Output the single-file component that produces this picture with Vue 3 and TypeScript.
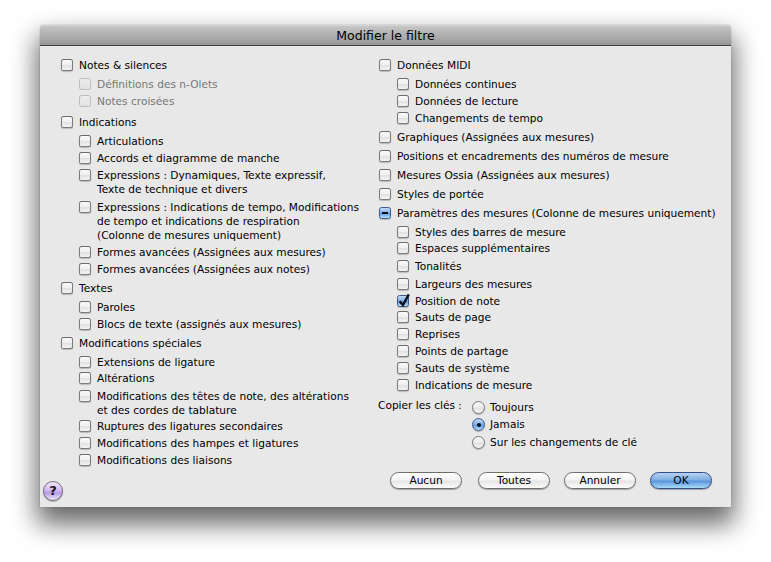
<script setup lang="ts">
type State = 'off' | 'on' | 'mixed'
interface Row { label: string; child?: boolean; gap: number; state?: State; disabled?: boolean }

const left: Row[] = [
  { label: 'Notes & silences', gap: 0 },
  { label: 'Définitions des n-Olets', child: true, gap: 5, disabled: true },
  { label: 'Notes croisées', child: true, gap: 3, disabled: true },
  { label: 'Indications', gap: 7 },
  { label: 'Articulations', child: true, gap: 5 },
  { label: 'Accords et diagramme de manche', child: true, gap: 3 },
  { label: 'Expressions : Dynamiques, Texte expressif,\nTexte de technique et divers', child: true, gap: 3 },
  { label: 'Expressions : Indications de tempo, Modifications\nde tempo et indications de respiration\n(Colonne de mesures uniquement)', child: true, gap: 4 },
  { label: 'Formes avancées (Assignées aux mesures)', child: true, gap: 3 },
  { label: 'Formes avancées (Assignées aux notes)', child: true, gap: 3 },
  { label: 'Textes', gap: 5 },
  { label: 'Paroles', child: true, gap: 5 },
  { label: 'Blocs de texte (assignés aux mesures)', child: true, gap: 3 },
  { label: 'Modifications spéciales', gap: 5 },
  { label: 'Extensions de ligature', child: true, gap: 5 },
  { label: 'Altérations', child: true, gap: 2 },
  { label: 'Modifications des têtes de note, des altérations\net des cordes de tablature', child: true, gap: 4 },
  { label: 'Ruptures des ligatures secondaires', child: true, gap: 2 },
  { label: 'Modifications des hampes et ligatures', child: true, gap: 3 },
  { label: 'Modifications des liaisons', child: true, gap: 3 },
]

const right: Row[] = [
  { label: 'Données MIDI', gap: 0 },
  { label: 'Données continues', child: true, gap: 5 },
  { label: 'Données de lecture', child: true, gap: 3 },
  { label: 'Changements de tempo', child: true, gap: 3 },
  { label: 'Graphiques (Assignées aux mesures)', gap: 5 },
  { label: 'Positions et encadrements des numéros de mesure', gap: 5 },
  { label: 'Mesures Ossia (Assignées aux mesures)', gap: 5 },
  { label: 'Styles de portée', gap: 5 },
  { label: 'Paramètres des mesures (Colonne de mesures uniquement)', gap: 5, state: 'mixed' },
  { label: 'Styles des barres de mesure', child: true, gap: 5 },
  { label: 'Espaces supplémentaires', child: true, gap: 2 },
  { label: 'Tonalités', child: true, gap: 4 },
  { label: 'Largeurs des mesures', child: true, gap: 4 },
  { label: 'Position de note', child: true, gap: 3, state: 'on' },
  { label: 'Sauts de page', child: true, gap: 2 },
  { label: 'Reprises', child: true, gap: 3 },
  { label: 'Points de partage', child: true, gap: 3 },
  { label: 'Sauts de système', child: true, gap: 3 },
  { label: 'Indications de mesure', child: true, gap: 3 },
]

const radios = [
  { label: 'Toujours', on: false, gap: 0 },
  { label: 'Jamais', on: true, gap: 3 },
  { label: 'Sur les changements de clé', on: false, gap: 4 },
]

const buttons = [
  { label: 'Aucun', primary: false },
  { label: 'Toutes', primary: false },
  { label: 'Annuler', primary: false },
  { label: 'OK', primary: true },
]
</script>

<template>
  <div class="page">
    <div class="window">
      <div class="titlebar">Modifier le filtre</div>
      <div class="content">
        <div class="col-left">
          <div class="list left-list">
            <div
              v-for="r in left"
              :key="r.label"
              class="row"
              :class="{ child: r.child, disabled: r.disabled }"
              :style="{ marginTop: r.gap + 'px' }"
            >
              <span class="box"></span>
              <span class="label">{{ r.label }}</span>
            </div>
          </div>
          <div class="help"><span>?</span></div>
        </div>
        <div class="col-right">
          <div class="list">
            <div
              v-for="r in right"
              :key="r.label"
              class="row"
              :class="{ child: r.child }"
              :style="{ marginTop: r.gap + 'px' }"
            >
              <span class="box" :class="r.state">
                <svg v-if="r.state === 'on'" class="tick" width="15" height="15" viewBox="0 0 15 15">
                  <path d="M2.6 8.2 L6 12 L11.8 1.4" fill="none" stroke="#0b0f1a" stroke-width="2.4" />
                </svg>
                <i v-if="r.state === 'mixed'" class="dash"></i>
              </span>
              <span class="label">{{ r.label }}</span>
            </div>
          </div>
          <div class="copy">
            <div class="copy-label">Copier les clés :</div>
            <div class="radios">
              <div v-for="o in radios" :key="o.label" class="radio-row" :style="{ marginTop: o.gap + 'px' }">
                <span class="radio" :class="{ on: o.on }"><i v-if="o.on"></i></span>
                <span class="label">{{ o.label }}</span>
              </div>
            </div>
          </div>
          <div class="buttons">
            <div v-for="b in buttons" :key="b.label" class="btn" :class="{ primary: b.primary }">{{ b.label }}</div>
          </div>
        </div>
      </div>
    </div>
  </div>
</template>

<style scoped>
.page {
  width: 771px;
  height: 562px;
  padding: 25px 40px 55px;
  box-sizing: border-box;
  background: #fff;
  font-family: "DejaVu Sans", sans-serif;
  font-size: 10.6px;
  color: #000;
  overflow: hidden;
}
.window {
  width: 691px;
  height: 482px;
  display: flex;
  flex-direction: column;
  background: #e8e8e8;
  border-radius: 4px 4px 0 0;
  box-shadow: 0 14px 26px 3px rgba(0, 0, 0, 0.6), 0 0 1px rgba(0, 0, 0, 0.6);
}
.titlebar {
  height: 21px;
  flex: none;
  box-sizing: border-box;
  border-radius: 4px 4px 0 0;
  border-top: 1px solid #d4d4d4;
  border-bottom: 1px solid #3f3f3f;
  background: linear-gradient(#c6c6c6, #979797);
  text-align: center;
  font-size: 12.5px;
  line-height: 20px;
}
.content {
  flex: 1;
  display: flex;
  min-height: 0;
}
.col-left {
  width: 339px;
  flex: none;
  display: flex;
  flex-direction: column;
  padding: 12px 0 6px 3px;
  box-sizing: border-box;
}
.left-list {
  margin-left: 18px;
}
.col-right {
  flex: 1;
  padding: 12px 19px 0 0;
  display: flex;
  flex-direction: column;
}
.row {
  display: flex;
  align-items: flex-start;
  line-height: 14px;
  white-space: pre;
}
.row.child {
  padding-left: 18px;
}
.row.disabled {
  color: #777;
}
.box {
  position: relative;
  flex: none;
  width: 12px;
  height: 12px;
  margin: 1px 6px 0 0;
  box-sizing: border-box;
  border: 1px solid #7b7b7b;
  border-top-color: #6c6c6c;
  border-radius: 2.5px;
  background: linear-gradient(#fafafa 0%, #f0f0f0 45%, #e2e2e2 55%, #f4f4f4 100%);
  box-shadow: 0 1px 1px rgba(0, 0, 0, 0.2);
}
.disabled .box {
  border-color: #bdbdbd;
  background: linear-gradient(#ececec, #e2e2e2);
  box-shadow: none;
}
.box.on,
.box.mixed {
  border-color: #3d5a8a;
  background: linear-gradient(#c2d9f3 0%, #86b4e8 45%, #5f9ae0 55%, #b5e0fa 100%);
}
.tick {
  position: absolute;
  left: -1px;
  top: -3px;
}
.dash {
  position: absolute;
  left: 2px;
  top: 4px;
  width: 6px;
  height: 2px;
  background: #0b0f1a;
}
.copy {
  display: flex;
  margin-top: 6px;
  margin-left: -1px;
}
.copy-label {
  width: 94px;
  line-height: 14px;
}
.radios {
  margin-top: 2px;
}
.radio-row {
  display: flex;
  line-height: 14px;
}
.radio {
  position: relative;
  flex: none;
  width: 13px;
  height: 13px;
  margin: 1px 5px 0 0;
  box-sizing: border-box;
  border: 1px solid #777;
  border-radius: 50%;
  background: linear-gradient(#fafafa 0%, #eee 45%, #e0e0e0 55%, #f6f6f6 100%);
  box-shadow: 0 1px 1px rgba(0, 0, 0, 0.25);
}
.radio.on {
  border-color: #3d5a8a;
  background: linear-gradient(#c2d9f3 0%, #86b4e8 45%, #5f9ae0 55%, #b5e0fa 100%);
}
.radio i {
  position: absolute;
  left: 3.5px;
  top: 3.5px;
  width: 4px;
  height: 4px;
  border-radius: 50%;
  background: #0b0f1a;
}
.buttons {
  display: flex;
  gap: 14px;
  margin-top: 23px;
  margin-left: 11px;
}
.btn {
  width: 72px;
  height: 17px;
  box-sizing: border-box;
  border: 1px solid #6e6e6e;
  border-radius: 9px;
  background: linear-gradient(#fff 0%, #f4f4f4 45%, #e6e6e6 55%, #fdfdfd 100%);
  box-shadow: 0 1px 1px rgba(0, 0, 0, 0.3);
  text-align: center;
  line-height: 15px;
}
.btn:first-child {
  margin-right: 2px;
}
.btn.primary {
  width: 62px;
  border-color: #2f4f8c;
  background: linear-gradient(#b9d2f0 0%, #7fafe4 45%, #5b95dc 55%, #a8dcf8 100%);
}
.list .row:first-child {
  margin-top: 0;
}
.help {
  margin-top: auto;
  width: 20px;
  height: 20px;
  box-sizing: border-box;
  border: 1px solid #6f6a78;
  border-radius: 50%;
  background: linear-gradient(#f0e6fb 0%, #d3bcf1 45%, #b79ae6 60%, #f0e8fb 100%);
  box-shadow: 0 1px 1px rgba(0, 0, 0, 0.3);
  text-align: center;
  line-height: 18px;
  font-size: 13px;
  font-weight: 700;
  color: #14101c;
}
</style>
